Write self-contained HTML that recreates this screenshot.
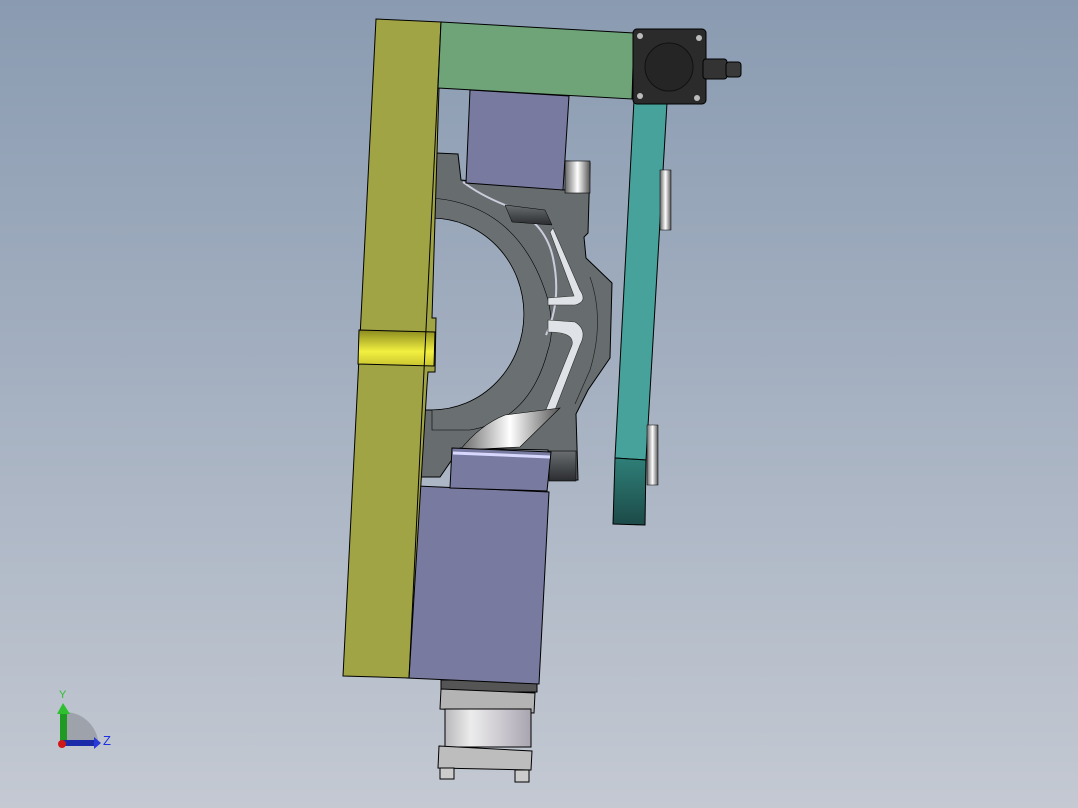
<!DOCTYPE html>
<html><head><style>
html,body{margin:0;padding:0;}
body{width:1078px;height:808px;overflow:hidden;background:linear-gradient(180deg,#8a9bb1 0%,#a3afc0 45%,#c4c9d2 100%);}
svg{position:absolute;left:0;top:0;}
</style></head><body>
<svg width="1078" height="808" viewBox="0 0 1078 808">
<defs>
<linearGradient id="gold" x1="0" y1="0" x2="0" y2="1"><stop offset="0" stop-color="#8a8a20"/><stop offset="0.6" stop-color="#f2f040"/><stop offset="1" stop-color="#c9c430"/></linearGradient>
<linearGradient id="teal" x1="0" y1="0" x2="0" y2="1"><stop offset="0" stop-color="#2f7f78"/><stop offset="1" stop-color="#1c4a48"/></linearGradient>
<linearGradient id="cyl" x1="0" y1="0" x2="1" y2="0"><stop offset="0" stop-color="#b8b8bc"/><stop offset="0.3" stop-color="#ececec"/><stop offset="0.7" stop-color="#c8c4cc"/><stop offset="1" stop-color="#a9a5b0"/></linearGradient>
<linearGradient id="shine" x1="0" y1="0" x2="1" y2="0"><stop offset="0" stop-color="#666"/><stop offset="0.5" stop-color="#fff"/><stop offset="1" stop-color="#555"/></linearGradient>
<linearGradient id="dark" x1="0" y1="0" x2="0" y2="1"><stop offset="0" stop-color="#6a6e70"/><stop offset="1" stop-color="#2a2c30"/></linearGradient>
</defs>
<g stroke="#000" stroke-width="1">
<!-- bottom cylinder -->
<rect x="441" y="680" width="96" height="12" fill="#555"/>
<polygon points="441,689 535,693 534,713 440,709" fill="#b4b4b4"/>
<rect x="445" y="709" width="86" height="38" fill="url(#cyl)"/>
<polygon points="439,746 532,751 531,770 438,768" fill="#bdbdbd"/>
<rect x="440" y="768" width="14" height="11" fill="#ccc"/>
<rect x="515" y="770" width="14" height="12" fill="#ccc"/>
<!-- big purple lower -->
<polygon points="417,486 549,492 539,684 407,678" fill="#787a9f"/>
<!-- grey part -->
<path d="M436,153 L458,154 L461,180 L565,190 L566,161 L590,163 L588,233 L584,237 L586,258 L612,283 L610,358 L588,390 L576,414 L578,480 L550,480 L548,450 L460,448 L440,477 L420,477 L420,410 L432,410 A92,96 0 0 0 432,218 L428,218 Z" fill="#676d6e"/>
<path d="M432,198 Q520,205 548,300 Q555,330 548,350 Q530,420 470,430 L432,430 L432,410 A92,96 0 0 0 432,218 Z" fill="#6a7072" stroke-width="0.6"/>
<path d="M463,182 Q480,195 505,205 Q545,220 553,258 Q562,300 546,335" fill="none" stroke="#ccd" stroke-width="2"/>
<path d="M505,205 L545,210 L552,225 L512,222 Z" fill="url(#dark)" stroke-width="0.5"/>
<path d="M553,228 L580,290 Q588,302 575,305 L548,305 L548,298 L574,296 L550,232 Z" fill="#dfe3e8" stroke="#333" stroke-width="0.6"/>
<path d="M548,320 L575,322 Q588,330 580,345 L555,410 L545,412 L572,345 Q575,332 548,332 Z" fill="#dfe3e8" stroke="#333" stroke-width="0.6"/>
<path d="M590,277 Q605,320 590,370 L575,404" fill="none" stroke="#222" stroke-width="0.7"/>
<path d="M505,415 L560,408 L520,447 L460,450 Q480,425 505,415 Z" fill="url(#shine)" stroke-width="0.6"/>
<rect x="565" y="161" width="25" height="32" fill="url(#shine)" stroke-width="0.6"/>
<rect x="549" y="451" width="27" height="30" fill="url(#dark)" stroke-width="0.6"/>
<!-- purple small blocks -->
<polygon points="470,90 569,96 563,190 466,183" fill="#787a9f"/>
<polygon points="452,448 551,452 547,491 450,488" fill="#787a9f"/>
<line x1="453" y1="453" x2="550" y2="457" stroke="#d8d8ff" stroke-width="3"/>
<!-- yellow bar -->
<path d="M376,19 L441,22 L432,318 L436,318 L435,372 L428,372 L427,385 L409,678 L343,676 Z" fill="#a1a444"/>
<polygon points="359,330 435,332 434,366 358,364" fill="url(#gold)"/>
<line x1="441" y1="22" x2="409" y2="678"/>
<!-- green bar -->
<polygon points="441,22 634,33 632,99 438,88" fill="#6fa479"/>
<!-- teal bar -->
<polygon points="634,100 667,103 646,460 615,458" fill="#46a29a"/>
<polygon points="615,458 646,460 645,525 613,524" fill="url(#teal)"/>
<rect x="660" y="170" width="11" height="60" fill="url(#shine)" stroke-width="0.5"/>
<rect x="647" y="425" width="11" height="60" fill="url(#shine)" stroke-width="0.5"/>
<!-- motor -->
<rect x="633" y="29" width="73" height="75" rx="4" fill="#2b2b2b"/>
<circle cx="669" cy="67" r="24" fill="#252525" stroke="#111"/>
<circle cx="640" cy="36" r="3" fill="#bbb" stroke="none"/>
<circle cx="699" cy="38" r="3" fill="#bbb" stroke="none"/>
<circle cx="640" cy="96" r="3" fill="#bbb" stroke="none"/>
<circle cx="697" cy="98" r="3" fill="#bbb" stroke="none"/>
<rect x="703" y="59" width="24" height="20" rx="3" fill="#333"/>
<rect x="726" y="62" width="15" height="15" rx="3" fill="#3a3a3a"/>
</g>
<!-- axis triad -->
<path d="M64,740 L64,712 A34,34 0 0 1 98,740 Z" fill="#9ea2aa"/>
<rect x="60" y="712" width="7" height="30" fill="#1f9a22"/>
<polygon points="57,714 63,703 70,714" fill="#2ec02e"/>
<rect x="62" y="740" width="32" height="6" fill="#1a2aa8"/>
<polygon points="94,737 101,743 94,749" fill="#2a3ad8"/>
<circle cx="62" cy="744" r="4" fill="#d01818"/>
<text x="59" y="698" font-family="Liberation Sans, sans-serif" font-size="11" fill="#2ec02e">Y</text>
<text x="103" y="745" font-family="Liberation Sans, sans-serif" font-size="13" fill="#2030e0">Z</text>
</svg>
</body></html>
